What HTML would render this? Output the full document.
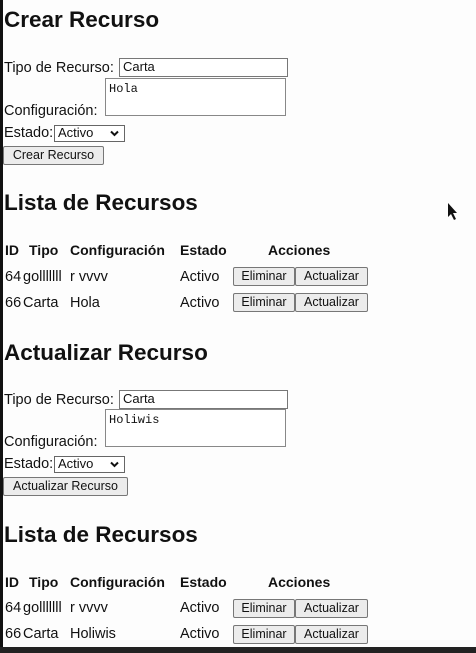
<!DOCTYPE html>
<html><head><meta charset="utf-8"><style>
*{margin:0;padding:0;box-sizing:border-box}
body{width:476px;height:653px;background:#fdfdfd;position:relative;overflow:hidden;font-family:"Liberation Sans",Arial,sans-serif;color:#111}
.a{position:absolute;white-space:nowrap}
.h{font-weight:bold;font-size:22.5px;line-height:28px}
.t{font-size:14.5px;line-height:18px}
.th{font-size:14px;line-height:18px;font-weight:bold}
.in{border:1px solid #777;background:#fff;font-size:13px;line-height:16px;padding-left:3px}
.ta{border:1px solid #888;background:#fff;font-family:"Liberation Mono",monospace;font-size:12px;padding:3px 0 0 3px;line-height:14px}
.btn{border:1px solid #777;background:#ececec;font-size:12.5px;text-align:center;line-height:16px;border-radius:2px}
.sel{border:1px solid #666;background:#fff;font-size:13px;line-height:14px;padding-left:3px}
</style></head><body>
<div class="a" style="left:0;top:0;width:3px;height:653px;background:#111"></div>
<div class="a" style="left:0;top:647px;width:476px;height:6px;background:#222"></div>

<div class="a h" style="left:4px;top:6px">Crear Recurso</div>
<div class="a t" style="left:4px;top:59px">Tipo de Recurso:</div>
<div class="a in" style="left:119px;top:58px;width:169px;height:19px">Carta</div>
<div class="a ta" style="left:105px;top:78px;width:181px;height:38px">Hola</div>
<div class="a t" style="left:4px;top:102px">Configuración:</div>
<div class="a t" style="left:4px;top:124px">Estado:</div>
<div class="a sel" style="left:54px;top:125px;width:71px;height:17px">Activo<svg style="position:absolute;right:5px;top:4px" width="9" height="7" viewBox="0 0 9 7"><path d="M1 1.5 L4.5 5 L8 1.5" stroke="#111" stroke-width="2" fill="none"/></svg></div>
<div class="a btn" style="left:3px;top:146px;width:101px;height:19px">Crear Recurso</div>

<div class="a h" style="left:4px;top:189px">Lista de Recursos</div>
<div class="a th" style="left:5px;top:241px">ID</div>
<div class="a th" style="left:29px;top:241px">Tipo</div>
<div class="a th" style="left:70px;top:241px">Configuración</div>
<div class="a th" style="left:180px;top:241px">Estado</div>
<div class="a th" style="left:268px;top:241px">Acciones</div>
<div class="a t" style="left:5px;top:268px">64</div><div class="a t" style="left:23px;top:268px">golllllll</div><div class="a t" style="left:70px;top:268px">r vvvv</div><div class="a t" style="left:180px;top:268px">Activo</div>
<div class="a btn" style="left:233px;top:267px;width:62px;height:19px">Eliminar</div><div class="a btn" style="left:295px;top:267px;width:73px;height:19px">Actualizar</div>
<div class="a t" style="left:5px;top:294px">66</div><div class="a t" style="left:23px;top:294px">Carta</div><div class="a t" style="left:70px;top:294px">Hola</div><div class="a t" style="left:180px;top:294px">Activo</div>
<div class="a btn" style="left:233px;top:293px;width:62px;height:19px">Eliminar</div><div class="a btn" style="left:295px;top:293px;width:73px;height:19px">Actualizar</div>

<div class="a h" style="left:4px;top:339px">Actualizar Recurso</div>
<div class="a t" style="left:4px;top:391px">Tipo de Recurso:</div>
<div class="a in" style="left:119px;top:390px;width:169px;height:19px">Carta</div>
<div class="a ta" style="left:105px;top:409px;width:181px;height:38px">Holiwis</div>
<div class="a t" style="left:4px;top:433px">Configuración:</div>
<div class="a t" style="left:4px;top:455px">Estado:</div>
<div class="a sel" style="left:54px;top:456px;width:71px;height:17px">Activo<svg style="position:absolute;right:5px;top:4px" width="9" height="7" viewBox="0 0 9 7"><path d="M1 1.5 L4.5 5 L8 1.5" stroke="#111" stroke-width="2" fill="none"/></svg></div>
<div class="a btn" style="left:3px;top:477px;width:125px;height:19px">Actualizar Recurso</div>

<div class="a h" style="left:4px;top:521px">Lista de Recursos</div>
<div class="a th" style="left:5px;top:573px">ID</div>
<div class="a th" style="left:29px;top:573px">Tipo</div>
<div class="a th" style="left:70px;top:573px">Configuración</div>
<div class="a th" style="left:180px;top:573px">Estado</div>
<div class="a th" style="left:268px;top:573px">Acciones</div>
<div class="a t" style="left:5px;top:599px">64</div><div class="a t" style="left:23px;top:599px">golllllll</div><div class="a t" style="left:70px;top:599px">r vvvv</div><div class="a t" style="left:180px;top:599px">Activo</div>
<div class="a btn" style="left:233px;top:599px;width:62px;height:19px">Eliminar</div><div class="a btn" style="left:295px;top:599px;width:73px;height:19px">Actualizar</div>
<div class="a t" style="left:5px;top:625px">66</div><div class="a t" style="left:23px;top:625px">Carta</div><div class="a t" style="left:70px;top:625px">Holiwis</div><div class="a t" style="left:180px;top:625px">Activo</div>
<div class="a btn" style="left:233px;top:625px;width:62px;height:19px">Eliminar</div><div class="a btn" style="left:295px;top:625px;width:73px;height:19px">Actualizar</div>

<svg class="a" style="left:447px;top:202px" width="12" height="20" viewBox="0 0 12 20"><path d="M1 1 L1 15 L4 12 L7 18 L9 17 L6 11 L10 11 Z" fill="#111"/></svg>
</body></html>
